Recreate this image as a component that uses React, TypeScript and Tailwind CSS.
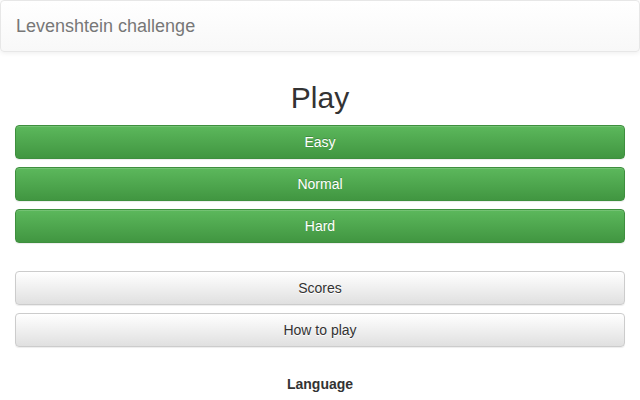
import React from 'react';

const greenBtn =
  'block w-full h-[34px] rounded-[4px] border border-[#3e8f3e] bg-gradient-to-b from-[#5cb85c] to-[#419641] text-[14px] text-white [text-shadow:0_-1px_0_rgba(0,0,0,0.2)] shadow-[inset_0_1px_0_rgba(255,255,255,0.15),0_1px_1px_rgba(0,0,0,0.075)]';

const defaultBtn =
  'block w-full h-[34px] rounded-[4px] border border-[#ccc] bg-gradient-to-b from-white to-[#e0e0e0] text-[14px] text-[#333] [text-shadow:0_1px_0_#fff] shadow-[inset_0_1px_0_rgba(255,255,255,0.15),0_1px_1px_rgba(0,0,0,0.075)]';

export default function App() {
  const levels = ['Easy', 'Normal', 'Hard'];

  return (
    <div className="min-h-[400px] bg-white font-['Liberation_Sans',Arial,sans-serif] text-[#333] text-[14px]">
      <nav className="h-[52px] flex items-center px-[15px] rounded-[4px] border border-[#e7e7e7] bg-gradient-to-b from-white to-[#f8f8f8] shadow-[inset_0_1px_0_rgba(255,255,255,0.15),0_1px_5px_rgba(0,0,0,0.075)]">
        <span className="text-[18px] text-[#777] pt-px">Levenshtein challenge</span>
      </nav>

      <main className="px-[15px]">
        <h2 className="mt-[29px] mb-[11px] h-[33px] leading-[33px] text-center text-[30px] text-[#333]">
          Play
        </h2>

        <div className="flex flex-col gap-2">
          {levels.map((l) => (
            <button key={l} className={greenBtn}>
              {l}
            </button>
          ))}
        </div>

        <div className="flex flex-col gap-2 mt-7">
          <button className={defaultBtn}>Scores</button>
          <button className={defaultBtn}>How to play</button>
        </div>

        <div className="mt-[27px] text-center font-bold leading-[20px]">Language</div>
      </main>
    </div>
  );
}
